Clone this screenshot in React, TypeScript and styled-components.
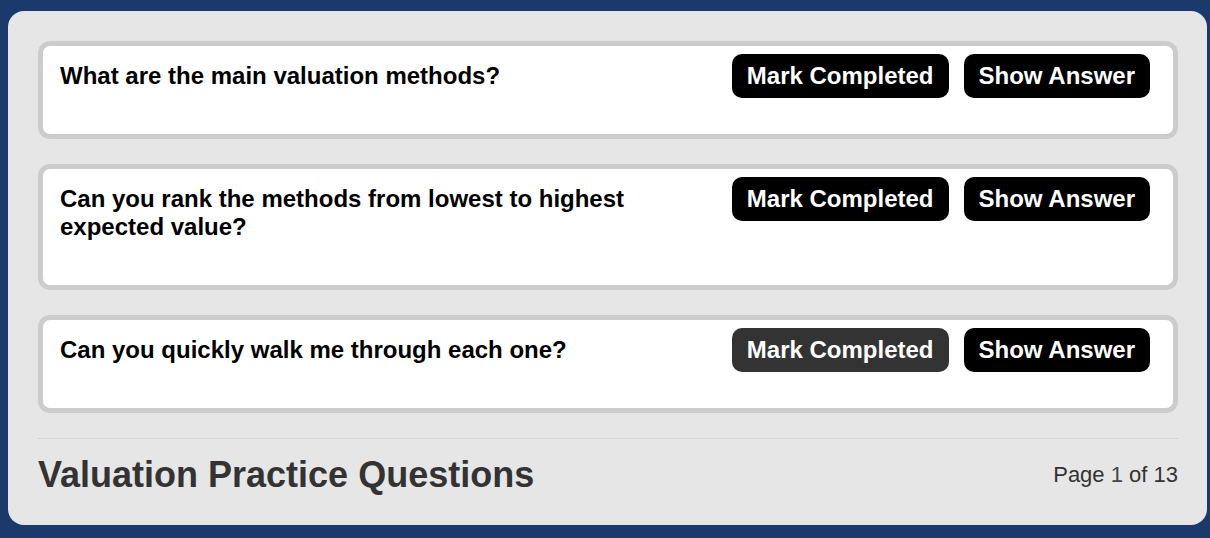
import { createGlobalStyle, styled } from "styled-components";

const GlobalStyle = createGlobalStyle`
    html, body {
        margin: 0;
        padding: 0;
        background: #1b3a6b;
    }
    body {
        font-family: "Liberation Sans", Arial, sans-serif;
    }
`;

const Page = styled.div`
    padding: 11px 3px 14px 8px;
`;

const Panel = styled.div`
    background: #e6e6e6;
    border-radius: 16px;
    padding: 30px 29px 30px 30px;
    display: flex;
    flex-direction: column;
    gap: 25px;
`;

const Card = styled.div`
    background: #ffffff;
    border: 5px solid #cccccc;
    border-radius: 12px;
    padding: 8px 23px 36px 17px;
`;

const Row = styled.div`
    display: flex;
    align-items: flex-start;
    gap: 15px;
`;

const Question = styled.h3`
    flex: 1;
    margin: 8px 0;
    font-size: 24px;
    line-height: 28px;
    font-weight: 700;
    color: #000000;
`;

const Actions = styled.div`
    display: flex;
    gap: 15px;
    flex-shrink: 0;
`;

const ActionButton = styled.button<{ $hovered?: boolean }>`
    font-family: "Liberation Sans", Arial, sans-serif;
    font-size: 24px;
    font-weight: 700;
    line-height: 28px;
    color: #ffffff;
    background: ${({ $hovered }) => ($hovered ? "#333333" : "#000000")};
    border: none;
    border-radius: 10px;
    padding: 8px 15px;
    cursor: pointer;
`;

const Footer = styled.div`
    border-top: 1px solid #d4d4d4;
    padding-top: 15px;
    display: flex;
    align-items: center;
    justify-content: space-between;
`;

const Title = styled.h1`
    margin: 0;
    font-size: 36px;
    line-height: 41px;
    font-weight: 700;
    color: #333333;
`;

const PageInfo = styled.div`
    font-size: 22px;
    line-height: 25px;
    color: #333333;
`;

const Current = styled.span`
    color: #444444;
`;

const questions = [
    "What are the main valuation methods?",
    "Can you rank the methods from lowest to highest expected value?",
    "Can you quickly walk me through each one?",
];

const App: React.FC = () => {
    return (
        <>
            <GlobalStyle />
            <Page>
                <Panel>
                    {questions.map((q, i) => (
                        <Card key={q}>
                            <Row>
                                <Question>{q}</Question>
                                <Actions>
                                    <ActionButton $hovered={i === 2}>Mark Completed</ActionButton>
                                    <ActionButton>Show Answer</ActionButton>
                                </Actions>
                            </Row>
                        </Card>
                    ))}
                    <Footer>
                        <Title>Valuation Practice Questions</Title>
                        <PageInfo>
                            Page <Current>1</Current> of 13
                        </PageInfo>
                    </Footer>
                </Panel>
            </Page>
        </>
    );
};

export default App;
